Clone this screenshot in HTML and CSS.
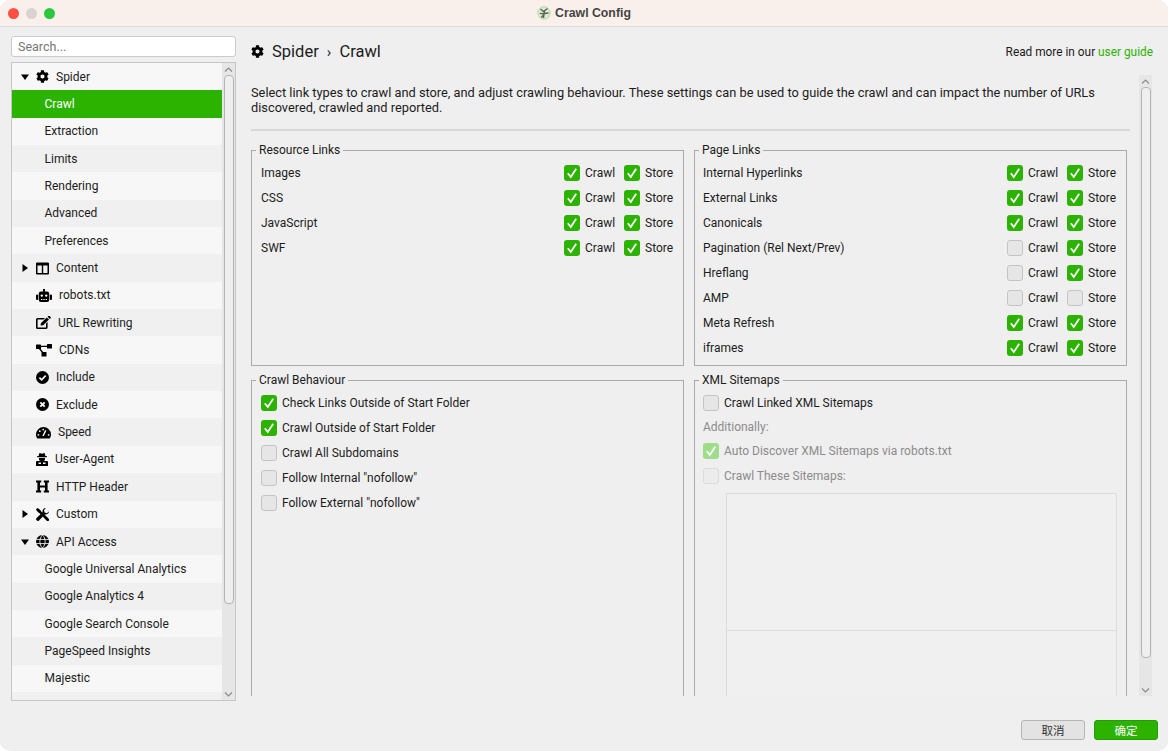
FILE: index.html
```html
<!DOCTYPE html>
<html lang="en">
<head>
<meta charset="utf-8">
<title>Crawl Config</title>
<link rel="stylesheet" href="styles.css">
</head>
<body>
<svg class="defs" width="0" height="0" aria-hidden="true">
  <symbol id="gear" viewBox="0 0 512 512"><path fill-rule="evenodd" d="M487.4 315.7l-42.6-24.6c4.3-23.2 4.3-47 0-70.2l42.6-24.6c4.9-2.8 7.1-8.6 5.5-14-11.1-35.6-30-67.8-54.7-94.6-3.8-4.1-10-5.1-14.8-2.3L380.8 110c-17.9-15.4-38.5-27.3-60.8-35.1V25.8c0-5.6-3.9-10.5-9.4-11.7-36.7-8.2-74.3-7.8-109.2 0-5.5 1.2-9.4 6.1-9.4 11.7V75c-22.2 7.9-42.8 19.8-60.8 35.1L88.7 85.5c-4.9-2.8-11-1.9-14.8 2.3-24.7 26.7-43.6 58.9-54.7 94.6-1.7 5.4.6 11.2 5.5 14L67.3 221c-4.3 23.2-4.3 47 0 70.2l-42.6 24.6c-4.9 2.8-7.1 8.6-5.5 14 11.1 35.6 30 67.8 54.7 94.6 3.8 4.1 10 5.1 14.8 2.3l42.6-24.6c17.9 15.4 38.5 27.3 60.8 35.1v49.2c0 5.6 3.9 10.5 9.4 11.7 36.7 8.2 74.3 7.8 109.2 0 5.5-1.2 9.4-6.1 9.4-11.7v-49.2c22.2-7.9 42.8-19.8 60.8-35.1l42.6 24.6c4.9 2.8 11 1.9 14.8-2.3 24.7-26.7 43.6-58.9 54.7-94.6 1.5-5.5-.7-11.3-5.6-14.1zM256 336c-44.1 0-80-35.9-80-80s35.9-80 80-80 80 35.9 80 80-35.9 80-80 80z"/></symbol>
  <symbol id="tick" viewBox="0 0 16 16"><path d="M3.8 8.2 L6.8 12 L12.2 3.8" fill="none" stroke="#fff" stroke-width="1.8"/></symbol>
  <symbol id="down" viewBox="0 0 8 8"><path d="M0 1.5 H8 L4 7 Z"/></symbol>
  <symbol id="right" viewBox="0 0 8 8"><path d="M1.5 0 V8 L7 4 Z"/></symbol>
</svg>
<div class="window">
  <header class="titlebar">
    <div class="lights"><i class="light red"></i><i class="light grey"></i><i class="light green"></i></div>
    <div class="wintitle">
      <svg class="appicon" viewBox="0 0 14 14"><circle cx="7" cy="7" r="6.2" fill="#dcebd0" stroke="#b4d8a0" stroke-width="1"/><path d="M7.5 4 L6.5 12 M7 6 L3.5 3 M7.2 5 L10.5 2.5 M7 8 L2.8 7.4 M7 7.5 L11.5 7 M6.8 9 L4.2 11.5" stroke="#5a6358" stroke-width="1.4" fill="none"/></svg>
      <span>Crawl Config</span>
    </div>
  </header>

  <div class="content">
    <aside class="sidebar">
      <input class="search" type="text" placeholder="Search...">
      <div class="tree">
        <ul class="treelist">
          <li class="node"><svg class="arrow"><use href="#down"/></svg><svg class="ico w13"><use href="#gear"/></svg><span>Spider</span></li>
          <li class="child selected">Crawl</li>
          <li class="child">Extraction</li>
          <li class="child">Limits</li>
          <li class="child">Rendering</li>
          <li class="child">Advanced</li>
          <li class="child">Preferences</li>
          <li class="node"><svg class="arrow"><use href="#right"/></svg><svg class="ico w13" viewBox="0 0 13 13"><path fill-rule="evenodd" d="M1 0.5 H12 A1 1 0 0 1 13 1.5 V11.5 A1 1 0 0 1 12 12.5 H1 A1 1 0 0 1 0 11.5 V1.5 A1 1 0 0 1 1 0.5 Z M1.5 3.6 V11 H5.8 V3.6 Z M7.2 3.6 V11 H11.5 V3.6 Z"/></svg><span>Content</span></li>
          <li class="node leaf"><svg class="ico w16" viewBox="0 0 16 13"><rect x="2.8" y="2.6" width="10.4" height="10.4" rx="2"/><rect x="0" y="5.6" width="2.2" height="5.4" rx="1"/><rect x="13.8" y="5.6" width="2.2" height="5.4" rx="1"/><rect x="7.2" y="0" width="1.6" height="3"/><circle cx="8" cy="1" r="1.1"/><circle cx="5.8" cy="6.6" r="1.2" fill="#f7f7f7"/><circle cx="10.2" cy="6.6" r="1.2" fill="#f7f7f7"/><rect x="5" y="10" width="1.4" height="1" fill="#f7f7f7"/><rect x="7.3" y="10" width="1.4" height="1" fill="#f7f7f7"/><rect x="9.6" y="10" width="1.4" height="1" fill="#f7f7f7"/></svg><span>robots.txt</span></li>
          <li class="node leaf"><svg class="ico w15" viewBox="0 0 15 13"><path fill-rule="evenodd" d="M1.5 2 H9 L7.6 3.4 H1.6 V11.4 H10 V7.4 L11.6 6 V11.5 A1.5 1.5 0 0 1 10 13 H1.5 A1.5 1.5 0 0 1 0 11.5 V3.5 A1.5 1.5 0 0 1 1.5 2 Z"/><path d="M4.5 9.6 L5 7 L10.8 1.4 L13 3.6 L7.2 9.2 Z M11.6.7 L12.3 0 A1 1 0 0 1 13.7 0 L14.6 .9 A1 1 0 0 1 14.6 2.2 L13.8 3 Z"/></svg><span>URL Rewriting</span></li>
          <li class="node leaf"><svg class="ico w16" viewBox="0 0 16 13"><rect x="0" y="0.5" width="5" height="4.5" rx=".5"/><rect x="11" y="0" width="5" height="4.5" rx=".5"/><rect x="5.5" y="8" width="5" height="4.5" rx=".5"/><path d="M4 2.4 H12 M3 4 L7.5 9.5" stroke="#000" stroke-width="1.3" fill="none"/></svg><span>CDNs</span></li>
          <li class="node leaf"><svg class="ico w13" viewBox="0 0 13 13"><circle cx="6.5" cy="6.5" r="6.5"/><path d="M3.4 6.7 L5.6 8.9 L9.7 4.6" stroke="#f0f0f0" stroke-width="1.7" fill="none"/></svg><span>Include</span></li>
          <li class="node leaf"><svg class="ico w13" viewBox="0 0 13 13"><circle cx="6.5" cy="6.5" r="6.5"/><path d="M4.3 4.3 L8.7 8.7 M8.7 4.3 L4.3 8.7" stroke="#f7f7f7" stroke-width="1.9" fill="none"/></svg><span>Exclude</span></li>
          <li class="node leaf"><svg class="ico w15" viewBox="0 0 15 13"><path d="M7.5 1 A7.5 7.5 0 0 1 15 8.5 C15 10 14.6 11.2 14 12 A1 1 0 0 1 13 12.5 H2 A1 1 0 0 1 1 12 C.4 11.2 0 10 0 8.5 A7.5 7.5 0 0 1 7.5 1 Z"/><path d="M7 10 L9.8 4.4" stroke="#f0f0f0" stroke-width="1.5"/><circle cx="7.2" cy="3.6" r=".9" fill="#f0f0f0"/><circle cx="3.8" cy="5.2" r=".9" fill="#f0f0f0"/><circle cx="2.4" cy="8.8" r=".9" fill="#f0f0f0"/><circle cx="12.6" cy="8.8" r=".9" fill="#f0f0f0"/></svg><span>Speed</span></li>
          <li class="node leaf"><svg class="ico w12" viewBox="0 0 12 13"><path d="M3.4 0 L6 .8 L8.6 0 L9.4 3 H10.8 V4.2 H1.2 V3 H2.6 Z"/><path d="M3 5 H9 V6 A3 2.2 0 0 1 3 6 Z"/><path fill-rule="evenodd" d="M1 8 H11 A1 1 0 0 1 12 9 V13 H0 V9 A1 1 0 0 1 1 8 Z M2.5 9.5 V11 H5 V9.5 Z M7 9.5 V11 H9.5 V9.5 Z"/></svg><span>User-Agent</span></li>
          <li class="node leaf"><svg class="ico w13" viewBox="0 0 13 13"><path d="M0 .5 H5.2 V2.4 H4 V5.4 H9 V2.4 H7.8 V.5 H13 V2.4 H11.6 V10.6 H13 V12.5 H7.8 V10.6 H9 V7.6 H4 V10.6 H5.2 V12.5 H0 V10.6 H1.4 V2.4 H0 Z"/></svg><span>HTTP Header</span></li>
          <li class="node"><svg class="arrow"><use href="#right"/></svg><svg class="ico w13" viewBox="0 0 13 13"><path d="M1.4 1.4 L11.2 11.2" stroke="#000" stroke-width="2.4" fill="none"/><path d="M0 1.4 L1.4 0 L4.8 2.6 L2.6 4.8 Z"/><path d="M8.6 7 L13 11 A1.5 1.5 0 0 1 11 13 L7 8.6 Z"/><path d="M9.8 0 A3.4 3.4 0 0 0 6.6 4.2 L.6 10 A1.7 1.7 0 0 0 3 12.4 L8.8 6.4 A3.4 3.4 0 0 0 13 3.2 L10.9 5.2 L8.6 4.6 L8 2.2 Z"/></svg><span>Custom</span></li>
          <li class="node"><svg class="arrow"><use href="#down"/></svg><svg class="ico w13" viewBox="0 0 13 13"><circle cx="6.5" cy="6.5" r="6.5"/><path d="M0 4.4 H13 M0 8.6 H13 M6.5 0 C3 3.5 3 9.5 6.5 13 C10 9.5 10 3.5 6.5 0" stroke="#f0f0f0" stroke-width=".9" fill="none"/></svg><span>API Access</span></li>
          <li class="child">Google Universal Analytics</li>
          <li class="child">Google Analytics 4</li>
          <li class="child">Google Search Console</li>
          <li class="child">PageSpeed Insights</li>
          <li class="child">Majestic</li>
          <li class="child"></li>
        </ul>
        <div class="vbar vbar-tree">
          <svg class="chev" viewBox="0 0 9 5"><path d="M1 4.5 L4.5 1 L8 4.5"/></svg>
          <div class="thumb thumb-tree"></div>
          <svg class="chev chev-end" viewBox="0 0 9 5"><path d="M1 .5 L4.5 4 L8 .5"/></svg>
        </div>
      </div>
    </aside>

    <main class="main">
      <div class="pagehead">
        <svg class="headgear"><use href="#gear"/></svg>
        <h1 class="crumbs">Spider <span class="sep">›</span> Crawl</h1>
        <p class="readmore">Read more in our <a class="guide" href="#">user guide</a></p>
      </div>
      <div class="scroller">
        <div class="pane">
          <p class="desc">Select link types to crawl and store, and adjust crawling behaviour. These settings can be used to guide the crawl and can impact the number of URLs discovered, crawled and reported.</p>
          <hr class="rule">
          <div class="groups">
            <fieldset class="group top">
              <legend>Resource Links</legend>
              <div class="row"><span class="rname">Images</span><span class="chk on"><svg><use href="#tick"/></svg></span><span class="lbl c">Crawl</span><span class="chk on"><svg><use href="#tick"/></svg></span><span class="lbl s">Store</span></div>
              <div class="row"><span class="rname">CSS</span><span class="chk on"><svg><use href="#tick"/></svg></span><span class="lbl c">Crawl</span><span class="chk on"><svg><use href="#tick"/></svg></span><span class="lbl s">Store</span></div>
              <div class="row"><span class="rname">JavaScript</span><span class="chk on"><svg><use href="#tick"/></svg></span><span class="lbl c">Crawl</span><span class="chk on"><svg><use href="#tick"/></svg></span><span class="lbl s">Store</span></div>
              <div class="row"><span class="rname">SWF</span><span class="chk on"><svg><use href="#tick"/></svg></span><span class="lbl c">Crawl</span><span class="chk on"><svg><use href="#tick"/></svg></span><span class="lbl s">Store</span></div>
            </fieldset>
            <fieldset class="group top">
              <legend>Page Links</legend>
              <div class="row"><span class="rname">Internal Hyperlinks</span><span class="chk on"><svg><use href="#tick"/></svg></span><span class="lbl c">Crawl</span><span class="chk on"><svg><use href="#tick"/></svg></span><span class="lbl s">Store</span></div>
              <div class="row"><span class="rname">External Links</span><span class="chk on"><svg><use href="#tick"/></svg></span><span class="lbl c">Crawl</span><span class="chk on"><svg><use href="#tick"/></svg></span><span class="lbl s">Store</span></div>
              <div class="row"><span class="rname">Canonicals</span><span class="chk on"><svg><use href="#tick"/></svg></span><span class="lbl c">Crawl</span><span class="chk on"><svg><use href="#tick"/></svg></span><span class="lbl s">Store</span></div>
              <div class="row"><span class="rname">Pagination (Rel Next/Prev)</span><span class="chk"></span><span class="lbl c">Crawl</span><span class="chk on"><svg><use href="#tick"/></svg></span><span class="lbl s">Store</span></div>
              <div class="row"><span class="rname">Hreflang</span><span class="chk"></span><span class="lbl c">Crawl</span><span class="chk on"><svg><use href="#tick"/></svg></span><span class="lbl s">Store</span></div>
              <div class="row"><span class="rname">AMP</span><span class="chk"></span><span class="lbl c">Crawl</span><span class="chk"></span><span class="lbl s">Store</span></div>
              <div class="row"><span class="rname">Meta Refresh</span><span class="chk on"><svg><use href="#tick"/></svg></span><span class="lbl c">Crawl</span><span class="chk on"><svg><use href="#tick"/></svg></span><span class="lbl s">Store</span></div>
              <div class="row"><span class="rname">iframes</span><span class="chk on"><svg><use href="#tick"/></svg></span><span class="lbl c">Crawl</span><span class="chk on"><svg><use href="#tick"/></svg></span><span class="lbl s">Store</span></div>
            </fieldset>
            <fieldset class="group bottom">
              <legend>Crawl Behaviour</legend>
              <div class="row opt"><span class="chk on"><svg><use href="#tick"/></svg></span><span class="lbl">Check Links Outside of Start Folder</span></div>
              <div class="row opt"><span class="chk on"><svg><use href="#tick"/></svg></span><span class="lbl">Crawl Outside of Start Folder</span></div>
              <div class="row opt"><span class="chk"></span><span class="lbl">Crawl All Subdomains</span></div>
              <div class="row opt"><span class="chk"></span><span class="lbl">Follow Internal "nofollow"</span></div>
              <div class="row opt"><span class="chk"></span><span class="lbl">Follow External "nofollow"</span></div>
            </fieldset>
            <fieldset class="group bottom">
              <legend>XML Sitemaps</legend>
              <div class="row opt"><span class="chk"></span><span class="lbl">Crawl Linked XML Sitemaps</span></div>
              <div class="additional">Additionally:</div>
              <div class="row opt dim"><span class="chk on"><svg><use href="#tick"/></svg></span><span class="lbl">Auto Discover XML Sitemaps via robots.txt</span></div>
              <div class="row opt dim"><span class="chk"></span><span class="lbl">Crawl These Sitemaps:</span></div>
              <div class="sitemaps"><div class="smtop"></div><div class="smbottom"></div></div>
            </fieldset>
          </div>
        </div>
        <div class="vbar vbar-main">
          <svg class="chev" viewBox="0 0 9 5"><path d="M1 4.5 L4.5 1 L8 4.5"/></svg>
          <div class="thumb thumb-main"></div>
          <svg class="chev chev-end" viewBox="0 0 9 5"><path d="M1 .5 L4.5 4 L8 .5"/></svg>
        </div>
      </div>
    </main>
  </div>

  <footer class="footer">
    <button class="btn" type="button">取消</button>
    <button class="btn primary" type="button">确定</button>
  </footer>
</div>
</body>
</html>
```

FILE: styles.css
```css
* { box-sizing: border-box; }
html, body { margin: 0; height: 100%; background: #fff; overflow: hidden; }
body { font-family: Roboto, "Liberation Sans", sans-serif; font-size: 12px; color: #1c1c1c; }
.defs { display: block; height: 0; }

.window { width: 1168px; height: 751px; background: #efefef; border-radius: 10px; overflow: hidden; display: flex; flex-direction: column; }

.titlebar { height: 27px; flex: none; background: #faf0eb; border-bottom: 1px solid #dcdad8; display: flex; align-items: center; justify-content: center; position: relative; }
.lights { display: flex; gap: 7px; padding-left: 7.5px; position: absolute; left: 0; top: 7.5px; }
.light { width: 11px; height: 11px; border-radius: 50%; display: block; }
.red { background: #ff4f44; }
.grey { background: #d9d3d1; }
.green { background: #2ac83f; }
.wintitle { display: flex; align-items: center; gap: 4px; font-family: "Liberation Sans", Arial, sans-serif; font-weight: 700; font-size: 12.3px; color: #444; }
.appicon { width: 14px; height: 14px; }

.content { flex: none; height: 673px; display: flex; padding: 9px 16px 0 11px; }

.sidebar { width: 225px; flex: none; display: flex; flex-direction: column; gap: 5px; }
.search { height: 21px; width: 100%; border: 1px solid #cbcbcb; border-radius: 3px; background: #fff; padding: 0 6px; font: 12.5px Roboto, sans-serif; outline: none; flex: none; }
.search::placeholder { color: #777; opacity: 1; }
.tree { height: 639px; flex: none; border: 1px solid #c6c6c6; display: flex; overflow: hidden; background: #f0f0f0; }
.treelist { list-style: none; margin: 0; padding: 0; flex: 1; min-width: 0; display: grid; grid-auto-rows: 27.35px; align-content: start; }
.treelist li { display: flex; align-items: center; background: #f0f0f0; white-space: nowrap; }
.treelist li:nth-child(odd) { background: #f7f7f7; }
.treelist li.selected { background: #2bb300; color: #fff; }
.child { padding-left: 32.5px; }
.node { padding-left: 9px; gap: 7px; }
.leaf { padding-left: 24px; }
.arrow { width: 8px; height: 8px; flex: none; }
.ico { height: 13px; flex: none; display: block; }
.w12 { width: 12px; }
.w13 { width: 13px; }
.w15 { width: 15px; }
.w16 { width: 16px; }

.vbar { flex: none; display: flex; flex-direction: column; align-items: center; background: #e6e6e6; }
.vbar-tree { width: 13px; }
.vbar-main { width: 13px; height: 621px; margin-left: 9px; }
.chev { width: 9px; height: 5px; flex: none; margin-top: 4px; fill: none; stroke: #8a8a8a; stroke-width: 1.1; }
.chev-end { margin-top: auto; margin-bottom: 3px; }
.thumb { width: 10px; flex: none; background: #efefef; border: 1px solid #b4b4b4; border-radius: 4px; }
.thumb-tree { height: 529px; margin-top: 3px; }
.thumb-main { height: 571px; margin-top: 3px; }

.main { flex: 1; min-width: 0; margin-left: 15px; display: flex; flex-direction: column; }
.pagehead { height: 39px; flex: none; display: flex; align-items: center; padding-top: 1px; padding-bottom: 9px; }
.headgear { width: 13px; height: 13px; flex: none; margin-right: 8px; }
.crumbs { margin: 0; font-size: 16.5px; font-weight: 400; color: #1c1c1c; flex: 1; }
.sep { font-size: 15px; margin: 0 4px; }
.readmore { margin: 0 -1px 0 0; font-size: 11.85px; color: #1c1c1c; }
.guide { color: #2bb300; text-decoration: none; }

.scroller { flex: none; height: 621px; display: flex; }
.pane { width: 879px; flex: none; height: 621px; overflow: hidden; }
.desc { margin: 10px 0 0; font-size: 12.8px; line-height: 15px; color: #1c1c1c; width: 860px; }
.rule { border: 0; height: 2px; background: #d8d8d8; margin: 14px 0 12px; }
.groups { display: grid; grid-template-columns: 433px 433px; column-gap: 10px; row-gap: 7px; align-items: start; }
.group { margin: 0; padding: 3.5px 9px 0 9px; min-width: 0; border: 1px solid #a9a9a9; }
.group:nth-child(even) { padding-left: 8px; }
.group.top { height: 223px; }
.group.bottom { height: 400px; }
.group legend { margin-left: -5px; padding: 0 3px; font-size: 12px; line-height: 14px; }
.group:nth-child(even) legend { margin-left: -4px; }
.row { height: 25px; display: flex; align-items: center; line-height: 16px; }
.rname { flex: 1; }
.chk { width: 16px; height: 16px; border-radius: 3px; background: #e6e6e6; border: 1px solid #c4c4c4; flex: none; display: block; }
.chk.on { background: #2bb300; border: 0; }
.chk svg { width: 16px; height: 16px; display: block; }
.lbl { margin-left: 5px; }
.lbl.c { width: 39px; }
.lbl.s { width: 29px; }
.dim { color: #8c8c8c; }
.dim .chk { background: #ececec; border-color: #dcdcdc; }
.dim .chk.on { background: #9ede8a; border: 0; }
.additional { height: 23px; line-height: 22px; color: #8c8c8c; }
.sitemaps { margin: 4px 0 0 23px; border: 1px solid #dcdcdc; height: 260px; background: #f0f0f0; }
.smtop { height: 137px; border-bottom: 1px solid #dcdcdc; }

.footer { flex: 1; display: flex; justify-content: flex-end; gap: 9px; padding: 20px 10px 0 0; }
.btn { width: 64px; height: 20px; border: 1px solid #b5b5b5; border-radius: 3px; background: #e3e3e3; font: 11.5px/16px "Noto Sans CJK SC", sans-serif; color: #333; padding: 0 0 1px; }
.btn.primary { background: #2bb300; border-color: #259c00; color: #fff; }
```
